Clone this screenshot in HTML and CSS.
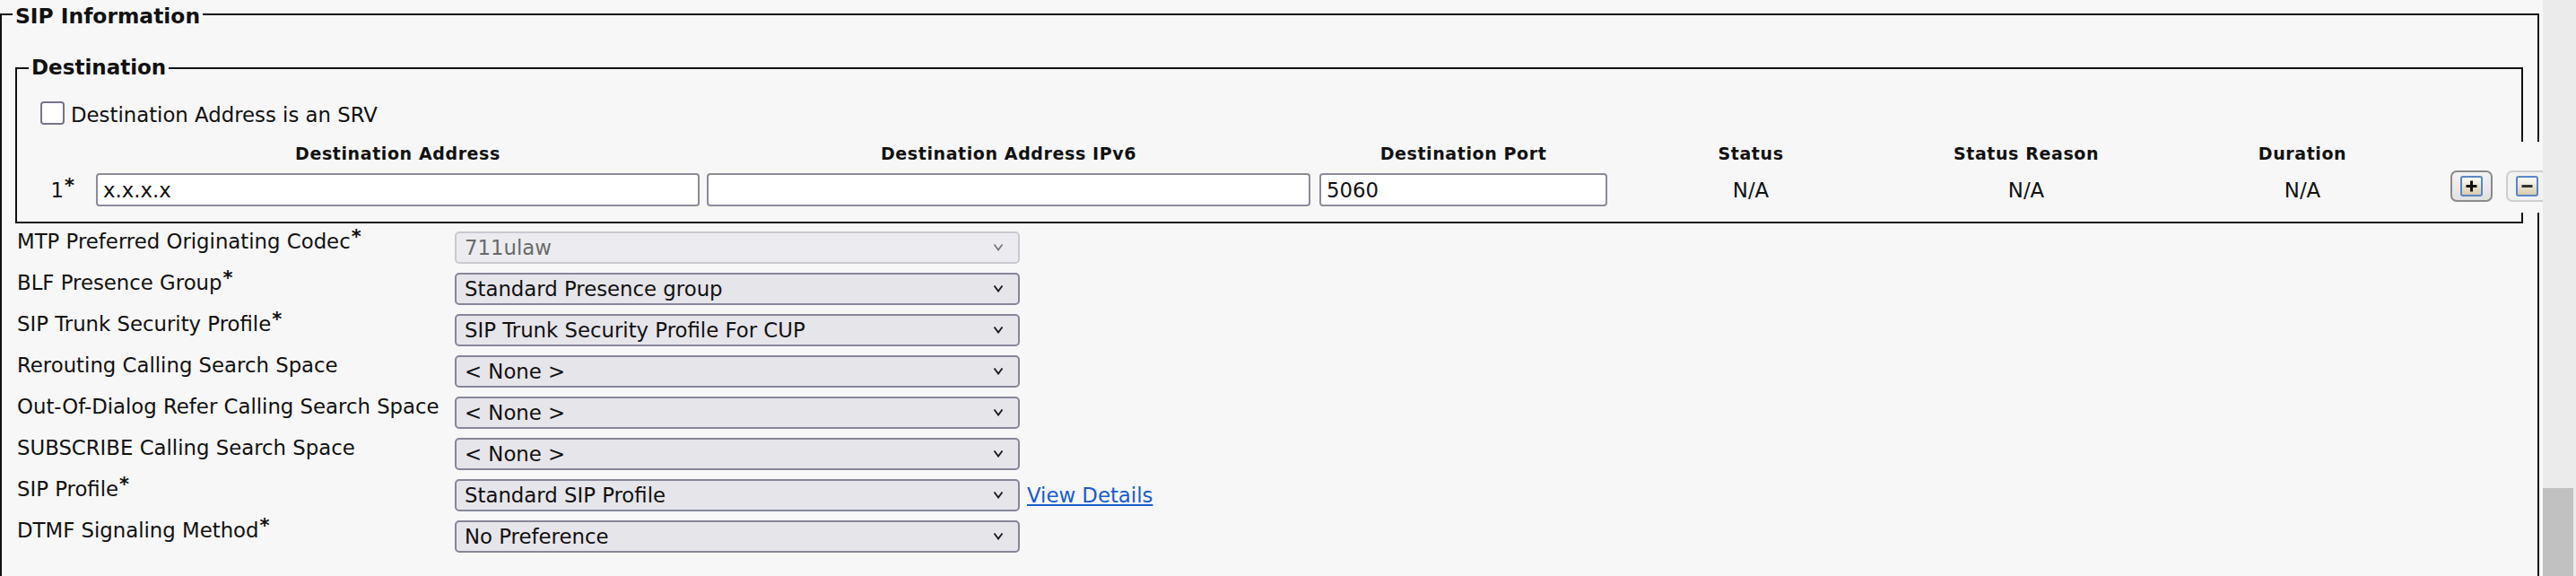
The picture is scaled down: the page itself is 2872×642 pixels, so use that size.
FILE: index.html
```html
<!DOCTYPE html>
<html>
<head>
<meta charset="utf-8">
<title>SIP Information</title>
<link rel="stylesheet" href="styles.css">
</head>
<body>
<fieldset class="sip">
  <legend>SIP Information</legend>
  <fieldset class="dest">
    <legend>Destination</legend>
    <label class="srv"><input type="checkbox" class="cb"><span>Destination Address is an SRV</span></label>
    <table class="dtable">
      <colgroup>
        <col class="w0"><col class="w1"><col class="w2"><col class="w3"><col class="w4"><col class="w5"><col class="w6"><col class="w7"><col class="w8">
      </colgroup>
      <thead>
        <tr>
          <th></th>
          <th class="p1">Destination Address</th>
          <th class="p2">Destination Address IPv6</th>
          <th class="p3">Destination Port</th>
          <th>Status</th>
          <th>Status Reason</th>
          <th>Duration</th>
          <th></th>
          <th></th>
        </tr>
      </thead>
      <tbody>
        <tr>
          <td class="num">1<span class="req">*</span></td>
          <td class="fld p1"><input type="text" class="txt" value="x.x.x.x"></td>
          <td class="fld p2"><input type="text" class="txt" value=""></td>
          <td class="fld p3"><input type="text" class="txt" value="5060"></td>
          <td class="na">N/A</td>
          <td class="na">N/A</td>
          <td class="na">N/A</td>
          <td class="btn"><button class="pm add" type="button"><svg width="25" height="23" viewBox="0 0 25 23"><defs><linearGradient id="g1" x1="0" y1="0" x2="0" y2="1"><stop offset="0" stop-color="#ffffff"/><stop offset="1" stop-color="#d6c9a8"/></linearGradient></defs><rect x="1" y="1" width="23" height="21" rx="2" fill="url(#g1)" stroke="#5a86c4" stroke-width="2"/><path d="M12.5 5.5v12M6.5 11.5h12" stroke="#111" stroke-width="3"/></svg></button></td>
          <td class="btn"><button class="pm del" type="button"><svg width="25" height="23" viewBox="0 0 25 23"><defs><linearGradient id="g2" x1="0" y1="0" x2="0" y2="1"><stop offset="0" stop-color="#ffffff"/><stop offset="1" stop-color="#d6c9a8"/></linearGradient></defs><rect x="1" y="1" width="23" height="21" rx="2" fill="url(#g2)" stroke="#5a86c4" stroke-width="2"/><path d="M6.5 11.5h12" stroke="#333" stroke-width="3"/></svg></button></td>
        </tr>
      </tbody>
    </table>
  </fieldset>

  <table class="form">
    <tr>
      <td class="lbl">MTP Preferred Originating Codec<span class="req">*</span></td>
      <td><div class="ctl"><div class="sel-wrap"><select class="sel" disabled><option>711ulaw</option></select><svg class="chev off" viewBox="0 0 12 9"><path d="M1.5 1.5l4.5 6 4.5-6" fill="none" stroke="#777" stroke-width="1.7"/></svg></div></div></td>
    </tr>
    <tr>
      <td class="lbl">BLF Presence Group<span class="req">*</span></td>
      <td><div class="ctl"><div class="sel-wrap"><select class="sel"><option>Standard Presence group</option></select><svg class="chev" viewBox="0 0 12 9"><path d="M1.5 1.5l4.5 6 4.5-6" fill="none" stroke="#1a1a1a" stroke-width="1.9"/></svg></div></div></td>
    </tr>
    <tr>
      <td class="lbl">SIP Trunk Security Profile<span class="req">*</span></td>
      <td><div class="ctl"><div class="sel-wrap"><select class="sel"><option>SIP Trunk Security Profile For CUP</option></select><svg class="chev" viewBox="0 0 12 9"><path d="M1.5 1.5l4.5 6 4.5-6" fill="none" stroke="#1a1a1a" stroke-width="1.9"/></svg></div></div></td>
    </tr>
    <tr>
      <td class="lbl">Rerouting Calling Search Space</td>
      <td><div class="ctl"><div class="sel-wrap"><select class="sel"><option>&lt; None &gt;</option></select><svg class="chev" viewBox="0 0 12 9"><path d="M1.5 1.5l4.5 6 4.5-6" fill="none" stroke="#1a1a1a" stroke-width="1.9"/></svg></div></div></td>
    </tr>
    <tr>
      <td class="lbl">Out-Of-Dialog Refer Calling Search Space</td>
      <td><div class="ctl"><div class="sel-wrap"><select class="sel"><option>&lt; None &gt;</option></select><svg class="chev" viewBox="0 0 12 9"><path d="M1.5 1.5l4.5 6 4.5-6" fill="none" stroke="#1a1a1a" stroke-width="1.9"/></svg></div></div></td>
    </tr>
    <tr>
      <td class="lbl">SUBSCRIBE Calling Search Space</td>
      <td><div class="ctl"><div class="sel-wrap"><select class="sel"><option>&lt; None &gt;</option></select><svg class="chev" viewBox="0 0 12 9"><path d="M1.5 1.5l4.5 6 4.5-6" fill="none" stroke="#1a1a1a" stroke-width="1.9"/></svg></div></div></td>
    </tr>
    <tr>
      <td class="lbl">SIP Profile<span class="req">*</span></td>
      <td><div class="ctl"><div class="sel-wrap"><select class="sel"><option>Standard SIP Profile</option></select><svg class="chev" viewBox="0 0 12 9"><path d="M1.5 1.5l4.5 6 4.5-6" fill="none" stroke="#1a1a1a" stroke-width="1.9"/></svg></div><a class="link" href="#">View Details</a></div></td>
    </tr>
    <tr>
      <td class="lbl">DTMF Signaling Method<span class="req">*</span></td>
      <td><div class="ctl"><div class="sel-wrap"><select class="sel"><option>No Preference</option></select><svg class="chev" viewBox="0 0 12 9"><path d="M1.5 1.5l4.5 6 4.5-6" fill="none" stroke="#1a1a1a" stroke-width="1.9"/></svg></div></div></td>
    </tr>
  </table>
</fieldset>
<div class="scrollbar"><div class="thumb"></div></div>
</body>
</html>
```

FILE: styles.css
```css
* { box-sizing: border-box; }
html, body { margin: 0; height: 100%; }
body {
  background: #f7f7f7;
  font-family: "DejaVu Sans", sans-serif;
  font-size: 22.8px;
  color: #111;
  overflow: hidden;
}

fieldset.sip {
  margin: 0;
  width: 2831px;
  min-width: 0;
  border: 2px solid #111;
  padding: 0 16px 60px 12px;
}
.sip > legend {
  font-weight: bold;
  font-size: 23.4px;
  line-height: 27px;
  padding: 5px 3px 0;
  margin: 0;
  color: #111;
}

fieldset.dest {
  margin: 30px 0 5px 3px;
  min-width: 0;
  border: 2px solid #111;
  padding: 25px 0 10px 13px;
}
.dest > legend {
  font-weight: bold;
  font-size: 23px;
  line-height: 27px;
  padding: 0 3px;
  margin: 0;
  color: #111;
}

.srv {
  display: flex;
  align-items: flex-start;
  margin-left: 13px;
  line-height: 28px;
}
.cb {
  appearance: none;
  width: 27px;
  height: 26px;
  margin: -1px 7px 0 0;
  border: 2px solid #74748a;
  border-radius: 4px;
  background: #fff;
}

.dtable {
  border-collapse: collapse;
  border-spacing: 0;
  table-layout: fixed;
  width: 2818px;
  margin-top: 16px;
  background: #f7f7f7;
}
.w0 { width: 75px; }
.w1 { width: 681px; }
.w2 { width: 683px; }
.w3 { width: 326px; }
.w4 { width: 310px; }
.w5 { width: 304px; }
.w6 { width: 312px; }
.w7 { width: 67px; }
.w8 { width: 60px; }

.dtable th {
  font-size: 19px;
  letter-spacing: 0.6px;
  font-weight: bold;
  line-height: 24px;
  padding: 1px 0 5px;
  text-align: center;
  color: #111;
  white-space: nowrap;
}
.dtable th.p1, .dtable td.p1 { padding-right: 8px; }
.dtable th.p2, .dtable td.p2 { padding-right: 10px; }
.dtable th.p3, .dtable td.p3 { padding-right: 5px; }

.dtable td {
  vertical-align: top;
  padding: 0;
}
.dtable td.num {
  text-align: right;
  padding: 10px 24px 0 0;
  line-height: 28px;
}
.dtable td.fld {
  padding-top: 5px;
  padding-bottom: 7px;
}
.txt {
  display: block;
  width: 100%;
  height: 37px;
  border: 2px solid #8a8a9a;
  border-radius: 4px;
  background: #fff;
  font: inherit;
  color: #111;
  padding: 0 0 0 6px;
  margin: 0;
}
.dtable td.na {
  text-align: center;
  padding-top: 10px;
  line-height: 28px;
}
.dtable td.btn { padding-top: 2px; }

.pm {
  display: flex;
  align-items: center;
  justify-content: center;
  width: 47px;
  height: 35px;
  padding: 0;
  border: 2px solid #8a8a8a;
  border-radius: 7px;
  background: linear-gradient(#f3f3f3, #e1e1e1);
}
.pm.add { margin-left: 9px; }
.pm.del {
  margin-left: 4px;
  border-color: #cecece;
  background: #f2f2f2;
}
.pm svg { display: block; }

.req {
  font-weight: bold;
  font-size: 21px;
  line-height: 0;
  vertical-align: 6px;
  margin-left: 1px;
}

.form {
  border-collapse: collapse;
  border-spacing: 0;
}
.form td {
  padding: 0;
  vertical-align: top;
  height: 46px;
}
.form td.lbl {
  width: 493px;
  padding: 1px 0 0 5px;
  line-height: 28px;
  white-space: nowrap;
}
.ctl {
  display: flex;
  align-items: center;
  margin-top: 4px;
}
.sel-wrap {
  position: relative;
  width: 630px;
  height: 36px;
}
.sel {
  appearance: none;
  display: block;
  width: 100%;
  height: 100%;
  margin: 0;
  border: 2px solid #86869a;
  border-radius: 5px;
  background: #e6e5ea;
  font: inherit;
  color: #111;
  padding: 0 0 0 9px;
}
.sel:disabled {
  border-color: #c9c9d2;
  background: #ececf0;
  color: #6a6a6a;
  opacity: 1;
}
.chev {
  position: absolute;
  right: 18px;
  top: 13px;
  width: 12px;
  height: 9px;
  pointer-events: none;
}
.link {
  margin-left: 8px;
  color: #1a5ccc;
  text-decoration: underline;
  white-space: nowrap;
}

.scrollbar {
  position: fixed;
  top: 0;
  right: 0;
  width: 37px;
  height: 100%;
  background: #ebebeb;
}
.thumb {
  position: absolute;
  left: 0;
  right: 3px;
  bottom: 0;
  height: 98px;
  background: #c1c1c1;
}
```
